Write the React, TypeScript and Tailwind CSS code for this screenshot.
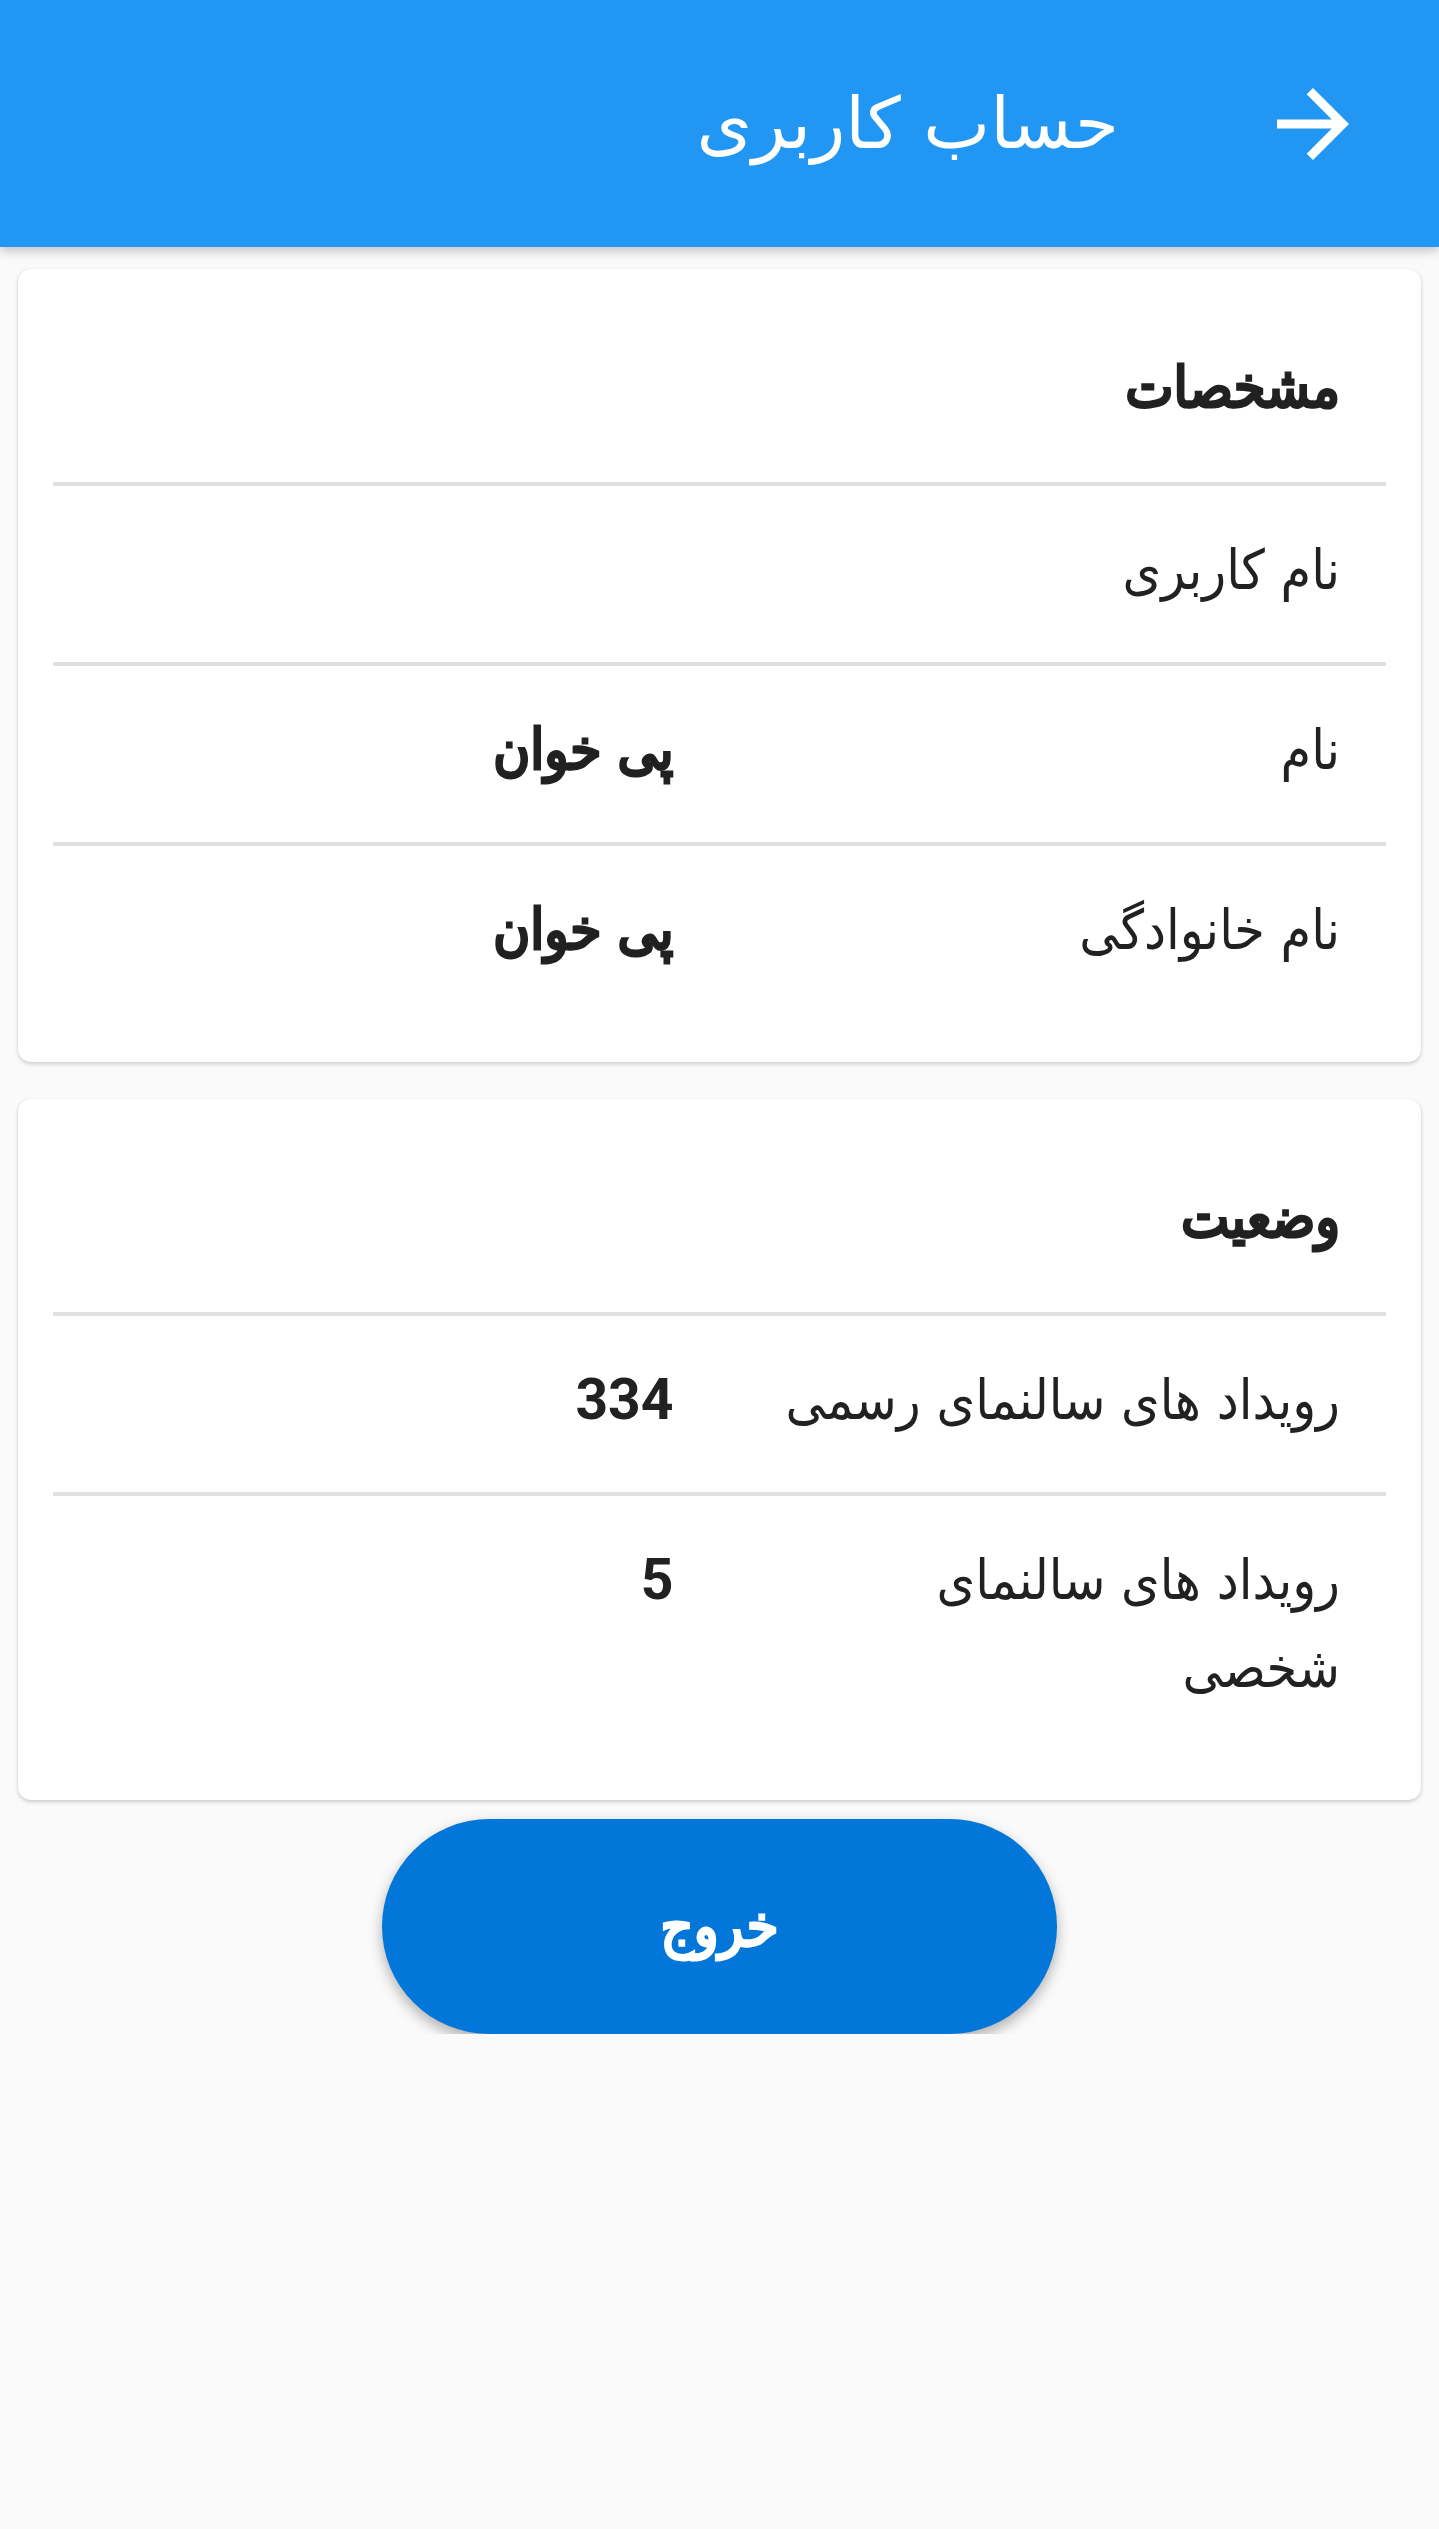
import React from "react";

// Arabic text: DejaVu Sans in its condensed width; digits stay in Roboto
const arabic = "font-['DejaVu_Sans_Condensed','DejaVu_Sans',sans-serif] font-stretch-condensed";
// no condensed bold face is installed, so thicken the regular one
const arabicBold = `${arabic} font-normal [-webkit-text-stroke:3px_currentColor]`;
const latin = "font-['Roboto','DejaVu_Sans',sans-serif]";

type Row = { label: string; value?: string };

const profileRows: Row[] = [
    { label: "نام کاربری" },
    { label: "نام", value: "پی خوان" },
    { label: "نام خانوادگی", value: "پی خوان" },
];

const statusRows: Row[] = [
    { label: "رویداد های سالنمای رسمی", value: "334" },
    { label: "رویداد های سالنمای شخصی", value: "5" },
];

function ArrowForward({ className }: { className?: string }) {
    return (
        <svg viewBox="0 0 24 24" className={className} fill="currentColor">
            <path d="M12 4l-1.41 1.41L16.17 11H4v2h12.17l-5.58 5.59L12 20l8-8z" />
        </svg>
    );
}

function InfoCard({ title, rows }: { title: string; rows: Row[] }) {
    return (
        <div className="bg-white rounded-[13px] shadow-[0_2px_4px_rgba(0,0,0,0.18),0_0_1px_rgba(0,0,0,0.12)] pt-[34px] pb-[40px] px-[35px]">
            <div className={`${arabicBold} px-[46px] pt-[40px] pb-[51px] text-[57px] leading-[88px] text-[#212121]`}>
                {title}
            </div>
            {rows.map((row, i) => (
                <div key={i} className="border-t-[4px] border-[#e0e0e0] grid grid-cols-2 pt-[40px] pb-[48px] text-[55px] leading-[88px] text-[#212121]">
                    <div className={`${arabic} px-[46px]`}>{row.label}</div>
                    <div className={`${row.value && /^\d+$/.test(row.value) ? latin + " font-bold text-[57px]" : arabicBold + " text-[56px]"} px-[46px]`}>
                        {row.value}
                    </div>
                </div>
            ))}
        </div>
    );
}

export default function App() {
    return (
        <div dir="rtl" className={`${latin} min-h-[2529px] bg-[#fafafa]`}>
            {/* App bar */}
            <header className="relative z-10 h-[247px] bg-[#2196f3] shadow-[0_4px_10px_rgba(0,0,0,0.22)] flex items-center pr-[72px]">
                <ArrowForward className="w-[108px] h-[108px] text-white" />
                <h1 className="mr-[140px] text-[71px] leading-none text-white font-normal font-['DejaVu_Sans',sans-serif]">
                    حساب کاربری
                </h1>
            </header>

            <main className="px-[18px] pt-[22px] flex flex-col gap-[37px]">
                <InfoCard title="مشخصات" rows={profileRows} />
                <InfoCard title="وضعیت" rows={statusRows} />
            </main>

            {/* Logout */}
            <div className="overflow-hidden pt-[19px] flex justify-center">
                <button className={`${arabicBold} w-[675px] h-[215px] rounded-full bg-[#0277d9] text-white text-[57px] shadow-[0_6px_14px_rgba(0,0,0,0.3)]`}>
                    خروج
                </button>
            </div>
        </div>
    );
}
